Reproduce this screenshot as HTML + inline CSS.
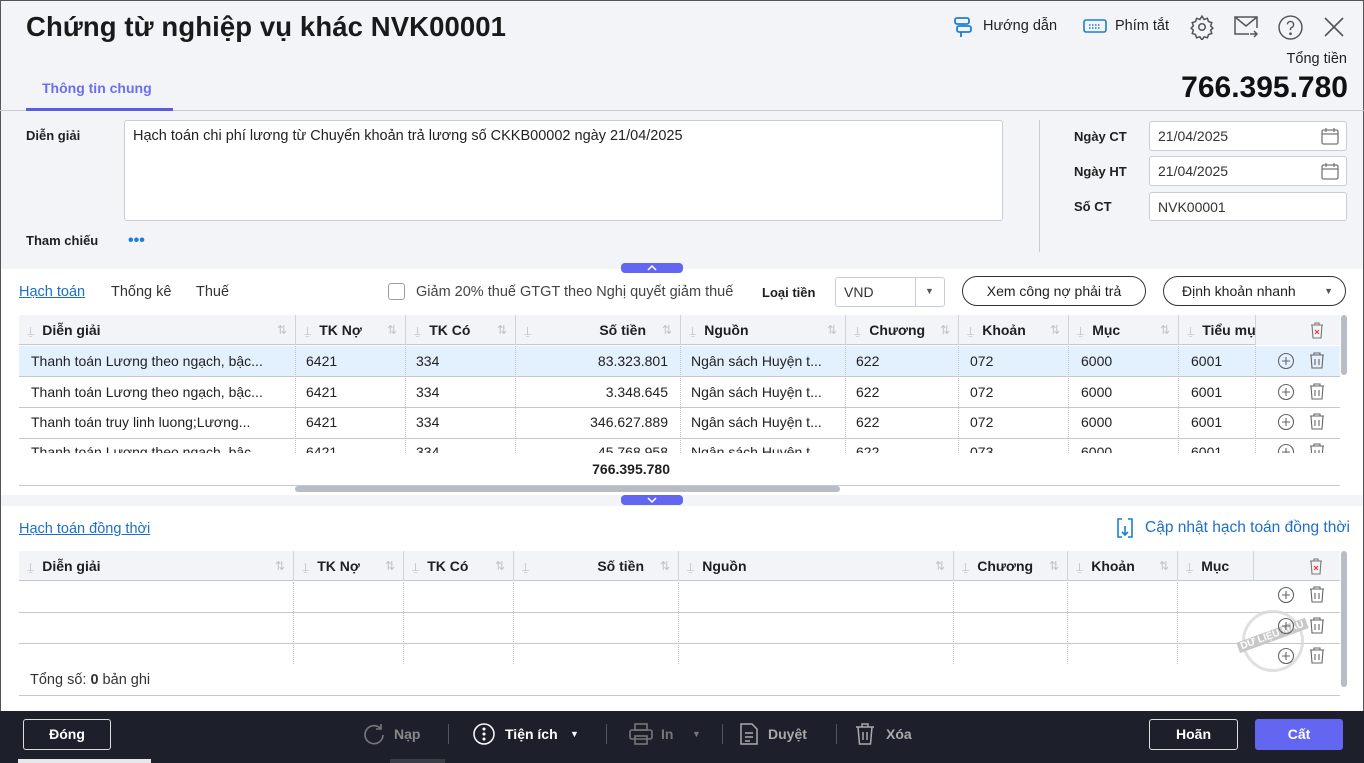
<!DOCTYPE html>
<html><head><meta charset="utf-8"><style>
*{box-sizing:border-box;margin:0;padding:0}
body{width:1364px;height:763px;overflow:hidden;font-family:"Liberation Sans",Arial,sans-serif;font-size:14px;color:#1f1f1f;background:#fff;position:relative}
.a{position:absolute}
.gray{background:#f3f4f8}
.lbl{font-weight:bold;font-size:13px;color:#1f1f1f}
.inp{background:#fff;border:1px solid #c9ccd3;border-radius:3px;font-size:14px;color:#333;padding:7px 8px}
.th{position:absolute;top:0;height:30px;line-height:30px;font-weight:bold;font-size:14px;border-left:1px solid #d0d3da}
.td{position:absolute;height:30px;line-height:30px;font-size:14px;white-space:nowrap;overflow:hidden}
.pin{color:#b5b8bf;font-weight:normal;font-size:12px;margin:0 8px 0 8px}
.sort{position:absolute;right:8px;color:#c0c3ca;font-weight:normal;font-size:12px}
.btn{position:absolute;border:1px solid #333;border-radius:16px;font-size:14px;text-align:center;line-height:28px;background:#fff}
</style></head><body>
<div class="a gray" style="left:0;top:0;width:1364px;height:269px"></div>
<div class="a" style="left:0;top:0;width:1px;height:711px;background:#555"></div>
<div class="a" style="left:1363px;top:0;width:1px;height:711px;background:#555"></div>
<div class="a" style="left:0;top:0;width:1364px;height:1px;background:#555"></div>
<div class="a" style="left:26px;top:11px;font-size:27.5px;font-weight:bold;color:#1a1a1a;letter-spacing:0.1px">Chứng từ nghiệp vụ khác NVK00001</div>

<svg class="a" style="left:952px;top:16px" width="22" height="22" viewBox="0 0 22 22" fill="none" stroke="#1b7fd6" stroke-width="1.8"><rect x="3" y="2" width="14" height="6" rx="2"/><rect x="5" y="10" width="14" height="6" rx="2"/><path d="M9 16v5"/></svg>
<div class="a" style="left:983px;top:18px;font-size:14.5px">Hướng dẫn</div>
<svg class="a" style="left:1083px;top:19px" width="24" height="14" viewBox="0 0 24 14" fill="none" stroke="#1b7fd6" stroke-width="1.6"><rect x="1" y="1" width="22" height="12" rx="2"/><path d="M6 6h12M6 9h12" stroke-dasharray="1.5 1.5"/></svg>
<div class="a" style="left:1115px;top:18px;font-size:14.5px">Phím tắt</div>
<svg class="a" style="left:1189px;top:14px" width="26" height="26" viewBox="0 0 24 24" fill="none" stroke="#555" stroke-width="1.4"><circle cx="12" cy="12" r="3"/><path d="M12 2l2 3 3-1 1 3 3 1-1 3 2 2-2 2 1 3-3 1-1 3-3-1-2 3-2-3-3 1-1-3-3-1 1-3-2-2 2-2-1-3 3-1 1-3 3 1z"/></svg>
<svg class="a" style="left:1233px;top:15px" width="26" height="24" viewBox="0 0 26 24" fill="none" stroke="#555" stroke-width="1.5"><path d="M16 19H2V2h22v11"/><path d="M2 2l11 9 11-9"/><path d="M17 19h7m-3-3l3 3-3 3"/></svg>
<svg class="a" style="left:1278px;top:15px" width="25" height="25" viewBox="0 0 24 24" fill="none" stroke="#555" stroke-width="1.4"><circle cx="12" cy="12" r="11"/><path d="M9 9a3 3 0 1 1 4 3c-1 .5-1 1-1 2.5"/><circle cx="12" cy="18" r=".6" fill="#555"/></svg>
<svg class="a" style="left:1324px;top:17px" width="20" height="20" viewBox="0 0 20 20" stroke="#555" stroke-width="1.6"><path d="M1 1l18 18M19 1L1 19"/></svg>
<div class="a" style="right:17px;top:51px;font-size:14.5px">Tổng tiền</div>
<div class="a" style="right:16px;top:71px;font-size:30px;font-weight:bold;color:#111">766.395.780</div>

<div class="a" style="left:42px;top:80px;font-size:14px;font-weight:bold;color:#6b6ef0">Thông tin chung</div>
<div class="a" style="left:0;top:110px;width:1364px;height:1px;background:#c9cbd2"></div>
<div class="a" style="left:26px;top:108px;width:147px;height:3px;background:#5b5ce6"></div>

<div class="a lbl" style="left:26px;top:128px">Diễn giải</div>
<div class="a inp" style="left:124px;top:120px;width:879px;height:101px;color:#222;font-size:14.5px">Hạch toán chi phí lương từ Chuyển khoản trả lương số CKKB00002 ngày 21/04/2025</div>
<div class="a lbl" style="left:26px;top:233px">Tham chiếu</div>
<div class="a" style="left:128px;top:232px;color:#1b7fd6;font-size:16px;font-weight:bold;letter-spacing:0px">•••</div>
<div class="a" style="left:1039px;top:120px;width:1px;height:132px;background:#c9cbd2"></div>
<div class="a lbl" style="left:1074px;top:129px">Ngày CT</div>
<div class="a lbl" style="left:1074px;top:164px">Ngày HT</div>
<div class="a lbl" style="left:1074px;top:199px">Số CT</div>
<div class="a inp" style="left:1149px;top:121px;width:198px;height:30px;padding:6px 8px">21/04/2025</div>
<div class="a inp" style="left:1149px;top:156px;width:198px;height:30px;padding:6px 8px">21/04/2025</div>
<div class="a inp" style="left:1149px;top:192px;width:198px;height:29px;padding:6px 8px">NVK00001</div>
<svg class="a" style="left:1321px;top:127px" width="18" height="18" viewBox="0 0 18 18" fill="none" stroke="#777" stroke-width="1.3"><rect x="1" y="3" width="16" height="14" rx="1.5"/><path d="M1 7h16M5 1v4M13 1v4"/></svg>
<svg class="a" style="left:1321px;top:162px" width="18" height="18" viewBox="0 0 18 18" fill="none" stroke="#777" stroke-width="1.3"><rect x="1" y="3" width="16" height="14" rx="1.5"/><path d="M1 7h16M5 1v4M13 1v4"/></svg>

<div class="a" style="left:621px;top:263px;width:62px;height:10px;background:#6366f1;border-radius:4px"></div>
<svg class="a" style="left:647px;top:264px" width="10" height="7" viewBox="0 0 10 7" fill="none" stroke="#fff" stroke-width="1.5"><path d="M1 6l4-4 4 4"/></svg>

<div class="a" style="left:19px;top:284px;color:#1b6fc9;text-decoration:underline;font-size:14.5px">Hạch toán</div>
<div class="a" style="left:111px;top:284px;font-size:14.5px;color:#333">Thống kê</div>
<div class="a" style="left:196px;top:284px;font-size:14.5px;color:#333">Thuế</div>
<div class="a" style="left:388px;top:283px;width:17px;height:17px;border:1px solid #9aa0aa;border-radius:3px;background:#fff"></div>
<div class="a" style="left:416px;top:284px;font-size:14.5px;color:#444">Giảm 20% thuế GTGT theo Nghị quyết giảm thuế</div>
<div class="a lbl" style="left:762px;top:285px">Loại tiền</div>
<div class="a inp" style="left:835px;top:277px;width:110px;height:30px;padding:6px 8px">VND</div>
<div class="a" style="left:915px;top:278px;width:1px;height:28px;background:#c9ccd3"></div>
<div class="a" style="left:925px;top:286px;font-size:9px;color:#555">▼</div>
<div class="btn" style="left:962px;top:276px;width:184px;height:30px">Xem công nợ phải trả</div>
<div class="btn" style="left:1163px;top:276px;width:183px;height:30px;text-align:left;padding-left:18px">Định khoản nhanh <span style="position:absolute;right:12px;font-size:9px;color:#555">▼</span></div>

<!-- table 1 -->
<div class="a" style="left:19px;top:315px;width:1321px;height:170px;overflow:hidden">
<div class="a gray" style="left:0;top:0;width:1321px;height:30px;border-bottom:1px solid #c5c8d0"></div>
<div class="th" style="left:0;width:276px;border-left:none"><span class="pin">⍊</span>Diễn giải<span class="sort">⇅</span></div>
<div class="th" style="left:276px;width:110px"><span class="pin">⍊</span>TK Nợ<span class="sort">⇅</span></div>
<div class="th" style="left:386px;width:110px"><span class="pin">⍊</span>TK Có<span class="sort">⇅</span></div>
<div class="th" style="left:496px;width:165px"><span class="pin">⍊</span><span style="position:absolute;right:34px">Số tiền</span><span class="sort">⇅</span></div>
<div class="th" style="left:661px;width:165px"><span class="pin">⍊</span>Nguồn<span class="sort">⇅</span></div>
<div class="th" style="left:826px;width:113px"><span class="pin">⍊</span>Chương<span class="sort">⇅</span></div>
<div class="th" style="left:939px;width:110px"><span class="pin">⍊</span>Khoản<span class="sort">⇅</span></div>
<div class="th" style="left:1049px;width:110px"><span class="pin">⍊</span>Mục<span class="sort">⇅</span></div>
<div class="th" style="left:1159px;width:77px;overflow:hidden;white-space:nowrap"><span class="pin">⍊</span>Tiểu mục</div>
<div class="th" style="left:1236px;width:85px;background:#f3f4f8"></div>
<svg class="a" style="left:1291px;top:6px" width="14" height="18" viewBox="0 0 14 18" fill="none" stroke="#777" stroke-width="1.1"><path d="M1 4h12M5 4V2h4v2M2 4l1 13h8l1-13"/><path d="M5 9l4 4M9 9l-4 4" stroke="#e33"/></svg>
<div class="a" style="left:0;top:31px;width:1321px;height:30px;background:#e3f0fd"></div>
<div class="a" style="left:0;top:61px;width:1321px;height:1px;background:#c5c8d0"></div>
<div class="a" style="left:0;top:92px;width:1321px;height:1px;background:#c5c8d0"></div>
<div class="a" style="left:0;top:123px;width:1321px;height:1px;background:#c5c8d0"></div>
<div class="a" style="left:0;top:138px;width:1321px;height:32px;background:#fff"></div>
</div>
<div class="a" style="left:19px;top:346px;width:1321px;height:107px;overflow:hidden">
<div class="a" style="left:276px;top:0;height:107px;border-left:1px dotted #c0c3ca"></div>
<div class="a" style="left:386px;top:0;height:107px;border-left:1px dotted #c0c3ca"></div>
<div class="a" style="left:496px;top:0;height:107px;border-left:1px dotted #c0c3ca"></div>
<div class="a" style="left:661px;top:0;height:107px;border-left:1px dotted #c0c3ca"></div>
<div class="a" style="left:826px;top:0;height:107px;border-left:1px dotted #c0c3ca"></div>
<div class="a" style="left:939px;top:0;height:107px;border-left:1px dotted #c0c3ca"></div>
<div class="a" style="left:1049px;top:0;height:107px;border-left:1px dotted #c0c3ca"></div>
<div class="a" style="left:1159px;top:0;height:107px;border-left:1px dotted #c0c3ca"></div>
<div class="a" style="left:1236px;top:0;height:107px;border-left:1px dotted #c0c3ca"></div>
</div>
<div class="a" style="left:19px;top:485px;width:1321px;height:1px;background:#c5c8d0"></div>
<div class="a" style="left:295px;top:486px;width:545px;height:6px;background:#b8bcc4;border-radius:3px"></div>
<div class="a" style="left:1341px;top:315px;width:6px;height:60px;background:#b8bcc4;border-radius:3px"></div>
<div class="a" style="left:560px;top:461px;width:110px;text-align:right;font-weight:bold;font-size:14px">766.395.780</div>

<div class="a gray" style="left:1px;top:495px;width:1362px;height:11px"></div>
<div class="a" style="left:621px;top:495px;width:62px;height:10px;background:#6366f1;border-radius:4px"></div>
<svg class="a" style="left:647px;top:497px" width="10" height="7" viewBox="0 0 10 7" fill="none" stroke="#fff" stroke-width="1.5"><path d="M1 1l4 4 4-4"/></svg>

<div class="a" style="left:19px;top:521px;color:#1b6fc9;text-decoration:underline;font-size:14.5px">Hạch toán đồng thời</div>
<svg class="a" style="left:1116px;top:517px" width="18" height="22" viewBox="0 0 18 22" fill="none" stroke="#1b7fd6" stroke-width="1.6"><path d="M6 2H2v18h4M12 2h4v18h-4M9 9v9m-3-3l3 3 3-3"/></svg>
<div class="a" style="left:1145px;top:519px;color:#1b6fc9;font-size:15.5px">Cập nhật hạch toán đồng thời</div>

<div class="a" style="left:19px;top:551px;width:1321px;height:113px;overflow:hidden">
<div class="a gray" style="left:0;top:0;width:1321px;height:30px;border-bottom:1px solid #c5c8d0"></div>
<div class="th" style="left:0;width:274px;border-left:none"><span class="pin">⍊</span>Diễn giải<span class="sort">⇅</span></div>
<div class="th" style="left:274px;width:110px"><span class="pin">⍊</span>TK Nợ<span class="sort">⇅</span></div>
<div class="th" style="left:384px;width:110px"><span class="pin">⍊</span>TK Có<span class="sort">⇅</span></div>
<div class="th" style="left:494px;width:165px"><span class="pin">⍊</span><span style="position:absolute;right:34px">Số tiền</span><span class="sort">⇅</span></div>
<div class="th" style="left:659px;width:275px"><span class="pin">⍊</span>Nguồn<span class="sort">⇅</span></div>
<div class="th" style="left:934px;width:114px"><span class="pin">⍊</span>Chương<span class="sort">⇅</span></div>
<div class="th" style="left:1048px;width:110px"><span class="pin">⍊</span>Khoản<span class="sort">⇅</span></div>
<div class="th" style="left:1158px;width:76px"><span class="pin">⍊</span>Mục</div>
<div class="th" style="left:1234px;width:87px"></div>
<svg class="a" style="left:1290px;top:6px" width="14" height="18" viewBox="0 0 14 18" fill="none" stroke="#777" stroke-width="1.1"><path d="M1 4h12M5 4V2h4v2M2 4l1 13h8l1-13"/><path d="M5 9l4 4M9 9l-4 4" stroke="#e33"/></svg>
<div class="a" style="left:0;top:61px;width:1321px;height:1px;background:#c5c8d0"></div>
<div class="a" style="left:0;top:92px;width:1321px;height:1px;background:#c5c8d0"></div>
<div class="a" style="left:274px;top:31px;height:82px;border-left:1px dotted #c0c3ca"></div>
<div class="a" style="left:384px;top:31px;height:82px;border-left:1px dotted #c0c3ca"></div>
<div class="a" style="left:494px;top:31px;height:82px;border-left:1px dotted #c0c3ca"></div>
<div class="a" style="left:659px;top:31px;height:82px;border-left:1px dotted #c0c3ca"></div>
<div class="a" style="left:934px;top:31px;height:82px;border-left:1px dotted #c0c3ca"></div>
<div class="a" style="left:1048px;top:31px;height:82px;border-left:1px dotted #c0c3ca"></div>
<div class="a" style="left:1158px;top:31px;height:82px;border-left:1px dotted #c0c3ca"></div>
</div>
<div class="a" style="left:1341px;top:551px;width:6px;height:136px;background:#b8bcc4;border-radius:3px"></div>
<div class="a" style="left:1242px;top:610px;width:62px;height:62px;border:3px solid #d8d8d8;border-radius:50%;opacity:.8"></div>
<div class="a" style="left:1236px;top:630px;font-size:10px;font-weight:bold;color:#fff;background:#c8c8c8;padding:0 3px;transform:rotate(-20deg)">DỮ LIỆU MẪU</div>
<div class="a" style="left:30px;top:672px;font-size:14.5px;color:#333">Tổng số: <b>0</b> bản ghi</div>
<div class="a" style="left:19px;top:695px;width:1321px;height:1px;background:#c5c8d0"></div>

<!-- footer -->
<div class="a" style="left:0;top:711px;width:1364px;height:52px;background:#1d1f2b"></div>
<div class="a" style="left:18px;top:759px;width:133px;height:4px;background:#e8e8e8"></div>
<div class="a" style="left:390px;top:759px;width:55px;height:4px;background:#3a3c46"></div>
<div class="a" style="left:23px;top:719px;width:88px;height:31px;border:1px solid #ddd;border-radius:3px;color:#fff;font-weight:bold;text-align:center;line-height:29px">Đóng</div>
<svg class="a" style="left:363px;top:723px" width="22" height="22" viewBox="0 0 22 22" fill="none" stroke="#777" stroke-width="1.6"><path d="M18 6A9 9 0 1 0 20 12"/><path d="M18 1v5h-5"/></svg>
<div class="a" style="left:394px;top:726px;color:#888;font-weight:bold">Nạp</div>
<div class="a" style="left:448px;top:724px;width:1px;height:20px;background:#555"></div>
<svg class="a" style="left:473px;top:723px" width="22" height="22" viewBox="0 0 22 22" fill="none" stroke="#fff" stroke-width="1.5"><circle cx="11" cy="11" r="10"/><circle cx="11" cy="6" r=".8" fill="#fff"/><circle cx="11" cy="11" r=".8" fill="#fff"/><circle cx="11" cy="16" r=".8" fill="#fff"/></svg>
<div class="a" style="left:505px;top:726px;color:#fff;font-weight:bold">Tiện ích</div>
<div class="a" style="left:570px;top:729px;font-size:9px;color:#fff">▼</div>
<div class="a" style="left:606px;top:724px;width:1px;height:20px;background:#555"></div>
<svg class="a" style="left:629px;top:723px" width="24" height="22" viewBox="0 0 24 22" fill="none" stroke="#777" stroke-width="1.6"><rect x="6" y="1" width="12" height="6"/><rect x="1" y="7" width="22" height="9" rx="2"/><rect x="6" y="13" width="12" height="8"/></svg>
<div class="a" style="left:661px;top:726px;color:#777;font-weight:bold">In</div>
<div class="a" style="left:692px;top:729px;font-size:9px;color:#777">▼</div>
<div class="a" style="left:722px;top:724px;width:1px;height:20px;background:#555"></div>
<svg class="a" style="left:740px;top:723px" width="18" height="22" viewBox="0 0 18 22" fill="none" stroke="#aaa" stroke-width="1.5"><path d="M1 1h11l5 5v15H1z"/><path d="M5 10h8M5 14h8M5 18h5"/></svg>
<div class="a" style="left:768px;top:726px;color:#aaa;font-weight:bold">Duyệt</div>
<div class="a" style="left:836px;top:724px;width:1px;height:20px;background:#555"></div>
<svg class="a" style="left:855px;top:723px" width="20" height="22" viewBox="0 0 20 22" fill="none" stroke="#aaa" stroke-width="1.5"><path d="M1 4h18M7 4V1h6v3M3 4l1.5 17h11L17 4M8 9v8M12 9v8"/></svg>
<div class="a" style="left:886px;top:726px;color:#aaa;font-weight:bold">Xóa</div>
<div class="a" style="left:1149px;top:719px;width:89px;height:31px;border:1px solid #ddd;border-radius:3px;color:#fff;font-weight:bold;text-align:center;line-height:29px">Hoãn</div>
<div class="a" style="left:1255px;top:719px;width:88px;height:31px;background:#6366f1;border-radius:3px;color:#fff;font-weight:bold;text-align:center;line-height:31px">Cất</div>

<!-- rows table 1 -->
<div class="a" style="left:19px;top:346px;width:1321px;height:107px;overflow:hidden;font-size:14px;color:#222">
<div class="td" style="left:12px;top:0">Thanh toán Lương theo ngạch, bậc...</div><div class="td" style="left:287px;top:0">6421</div><div class="td" style="left:397px;top:0">334</div><div class="td" style="left:496px;top:0;width:153px;text-align:right">83.323.801</div><div class="td" style="left:672px;top:0">Ngân sách Huyện t...</div><div class="td" style="left:837px;top:0">622</div><div class="td" style="left:951px;top:0">072</div><div class="td" style="left:1062px;top:0">6000</div><div class="td" style="left:1172px;top:0">6001</div>
<div class="td" style="left:12px;top:31px">Thanh toán Lương theo ngạch, bậc...</div><div class="td" style="left:287px;top:31px">6421</div><div class="td" style="left:397px;top:31px">334</div><div class="td" style="left:496px;top:31px;width:153px;text-align:right">3.348.645</div><div class="td" style="left:672px;top:31px">Ngân sách Huyện t...</div><div class="td" style="left:837px;top:31px">622</div><div class="td" style="left:951px;top:31px">072</div><div class="td" style="left:1062px;top:31px">6000</div><div class="td" style="left:1172px;top:31px">6001</div>
<div class="td" style="left:12px;top:61px">Thanh toán truy linh luong;Lương...</div><div class="td" style="left:287px;top:61px">6421</div><div class="td" style="left:397px;top:61px">334</div><div class="td" style="left:496px;top:61px;width:153px;text-align:right">346.627.889</div><div class="td" style="left:672px;top:61px">Ngân sách Huyện t...</div><div class="td" style="left:837px;top:61px">622</div><div class="td" style="left:951px;top:61px">072</div><div class="td" style="left:1062px;top:61px">6000</div><div class="td" style="left:1172px;top:61px">6001</div>
<div class="td" style="left:12px;top:91px">Thanh toán Lương theo ngạch, bậc...</div><div class="td" style="left:287px;top:91px">6421</div><div class="td" style="left:397px;top:91px">334</div><div class="td" style="left:496px;top:91px;width:153px;text-align:right">45.768.958</div><div class="td" style="left:672px;top:91px">Ngân sách Huyện t...</div><div class="td" style="left:837px;top:91px">622</div><div class="td" style="left:951px;top:91px">073</div><div class="td" style="left:1062px;top:91px">6000</div><div class="td" style="left:1172px;top:91px">6001</div>
<svg class="a" style="left:1257px;top:6px" width="60" height="110" viewBox="0 0 60 110" fill="none" stroke="#666" stroke-width="1.1">
<g id="ic"><circle cx="10" cy="9" r="7.5"/><path d="M10 5v8M6 9h8"/><path d="M34 3h14M38 3V1h6v2M35 3l1 13h10l1-13M39 7v6M43 7v6"/></g>
<use href="#ic" y="31"/><use href="#ic" y="61"/><use href="#ic" y="91"/></svg>
</div>
<svg class="a" style="left:1276px;top:586px" width="60" height="80" viewBox="0 0 60 80" fill="none" stroke="#666" stroke-width="1.1">
<g id="ic2"><circle cx="10" cy="9" r="7.5"/><path d="M10 5v8M6 9h8"/><path d="M34 3h14M38 3V1h6v2M35 3l1 13h10l1-13M39 7v6M43 7v6"/></g>
<use href="#ic2" y="31"/><use href="#ic2" y="61"/></svg>
</body></html>
